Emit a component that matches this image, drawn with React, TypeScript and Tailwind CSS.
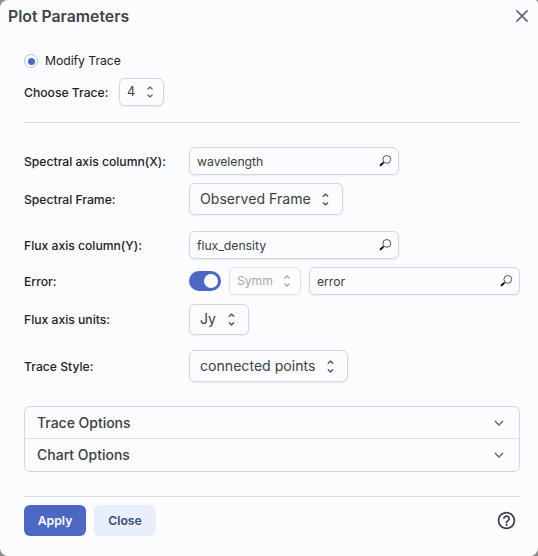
import type { ReactNode } from 'react';

const box =
  'flex shrink-0 items-center rounded-[6px] border border-[#ced7e3] bg-[#fcfcfe] text-[#3a3f45] shadow-[0_1px_2px_rgba(21,21,21,0.08)]';

function UnfoldIcon({ className }: { className: string }) {
  return (
    <svg viewBox="0 0 24 24" fill="currentColor" className={className}>
      <path d="m12 5.83 2.46 2.46a1 1 0 0 0 1.41-1.41L12.7 3.7a1 1 0 0 0-1.41 0L8.12 6.88a1 1 0 1 0 1.41 1.41L12 5.83zm0 12.34-2.46-2.46a1 1 0 0 0-1.41 1.41l3.17 3.18a1 1 0 0 0 1.41 0l3.17-3.17a1 1 0 0 0-1.41-1.41L12 18.17z" />
    </svg>
  );
}

function SearchIcon() {
  return (
    <svg viewBox="0 0 14 14" fill="none" className="h-[14px] w-[14px] shrink-0">
      <circle cx="8.8" cy="5.4" r="3.9" stroke="#444" strokeWidth="0.9" />
      <path d="M5.9 8.2 5 9.1" stroke="#333" strokeWidth="1" />
      <path d="M4.8 9.3 2.6 11.3" stroke="#050505" strokeWidth="1.9" strokeLinecap="round" />
    </svg>
  );
}

function Chevron() {
  return (
    <svg viewBox="0 0 10 6" fill="none" className="h-[6px] w-[10px]">
      <path d="M1 1 5 5 9 1" stroke="#636b74" strokeWidth="1.5" />
    </svg>
  );
}

function ColumnInput({ value, className }: { value: string; className: string }) {
  return (
    <div className={`${box} h-7 justify-between pr-[6px] pl-[7px] ${className}`}>
      <span className="pt-px text-[12.25px] leading-[18px] tracking-[-0.04px]">{value}</span>
      <SearchIcon />
    </div>
  );
}

function Select({ value, className }: { value: string; className: string }) {
  return (
    <div className={`${box} justify-between pr-[8px] pl-[10px] text-[14.1px] leading-5 ${className}`}>
      <span>{value}</span>
      <UnfoldIcon className="h-[17px] w-[17px] text-[#555e68]" />
    </div>
  );
}

function Row({ label, className, children }: { label: string; className: string; children: ReactNode }) {
  return (
    <div className={`flex items-center ${className}`}>
      <span className="w-[165px] shrink-0 pt-px text-[12.2px] leading-[18px] font-medium tracking-[-0.02px]">
        {label}
      </span>
      {children}
    </div>
  );
}

export default function App() {
  return (
    <div className="h-[556px] w-[538px] bg-[#8b8b90] font-['Inter','Liberation_Sans',sans-serif] text-[#202326]">
      <div className="flex h-full flex-col rounded-[8px] rounded-tr-[4px] bg-[#fcfcfe]">
        <header className="flex h-8 items-center justify-between pr-[9px] pl-2">
          <h1 className="pt-[2px] text-[15.8px] leading-6 font-semibold text-[#3f444b]">Plot Parameters</h1>
          <svg viewBox="0 0 14 14" fill="none" className="h-[14px] w-[14px]">
            <path d="M1.4 1.4 12.6 12.6M12.6 1.4 1.4 12.6" stroke="#5d656f" strokeWidth="1.6" />
          </svg>
        </header>

        <main className="flex flex-col px-6 pr-[18px] pt-5">
          <div className="flex h-[18px] items-center gap-[7px]">
            <span className="flex h-[14px] w-[14px] items-center justify-center rounded-full border border-[#a8c0ee]">
              <span className="h-[7px] w-[7px] rounded-full bg-[#4c68c4]" />
            </span>
            <span className="text-[12.2px] leading-[18px] tracking-[-0.04px]">Modify Trace</span>
          </div>

          <div className="mt-2 flex h-7 items-center">
            <span className="w-[95px] pt-px text-[12.2px] leading-[18px] font-medium tracking-[-0.02px]">
              Choose Trace:
            </span>
            <div className={`${box} h-7 w-[45px] justify-between pr-[5px] pl-[7px] text-[12.6px]`}>
              <span className="pt-px">4</span>
              <UnfoldIcon className="h-4 w-4 text-[#636b74]" />
            </div>
          </div>

          <div className="mt-4 h-px bg-[#d9dce2]" />

          <Row label="Spectral axis column(X):" className="mt-6 h-7">
            <ColumnInput value="wavelength" className="w-[210px]" />
          </Row>
          <Row label="Spectral Frame:" className="mt-2 h-8">
            <Select value="Observed Frame" className="h-8 w-[154px]" />
          </Row>
          <Row label="Flux axis column(Y):" className="mt-4 h-7">
            <ColumnInput value="flux_density" className="w-[210px]" />
          </Row>
          <Row label="Error:" className="mt-2 h-7">
            <div className="mr-2 flex h-5 w-8 items-center justify-end rounded-full bg-[#4c68c4] pr-[3px]">
              <span className="h-[14px] w-[14px] rounded-full bg-white" />
            </div>
            <div className="mr-2 flex h-7 w-[72px] items-center justify-between rounded-[6px] border border-[#dde4ed] pr-[5px] pl-[7px] text-[12.2px] tracking-[-0.04px] text-[#a2a8af] shadow-[0_1px_2px_rgba(21,21,21,0.06)]">
              <span>Symm</span>
              <UnfoldIcon className="h-4 w-4" />
            </div>
            <ColumnInput value="error" className="w-[211px]" />
          </Row>
          <Row label="Flux axis units:" className="mt-2 h-8">
            <Select value="Jy" className="h-[31px] w-[60px]" />
          </Row>
          <Row label="Trace Style:" className="mt-[15px] h-8">
            <Select value="connected points" className="h-8 w-[159px]" />
          </Row>

          <div className="mt-6 flex h-[66px] flex-col rounded-[6px] border border-[#ced7e3] text-[14px] font-medium text-[#3a3f45]">
            <div className="flex h-8 items-center justify-between border-b border-[#d7dfe7] pr-[15px] pl-3">
              <span className="tracking-[-0.02px]">Trace Options</span>
              <Chevron />
            </div>
            <div className="flex h-[31px] items-center justify-between pr-[15px] pl-3">
              <span>Chart Options</span>
              <Chevron />
            </div>
          </div>

          <div className="mt-6 h-px bg-[#d9dce2]" />

          <footer className="mt-2 flex h-[31px] items-center">
            <button className="h-[31px] w-[62px] rounded-[6px] bg-[#4c68c4] pt-px text-[12.25px] font-semibold text-white">
              Apply
            </button>
            <button className="ml-2 h-[31px] w-[62px] rounded-[6px] bg-[#e8eefa] pt-px text-[12.25px] font-semibold text-[#3b4b80]">
              Close
            </button>
            <svg viewBox="0 0 24 24" fill="#3a3f45" className="mr-[3px] ml-auto h-[21px] w-[21px]">
              <path d="M11 18h2v-2h-2v2zm1-16C6.48 2 2 6.48 2 12s4.48 10 10 10 10-4.48 10-10S17.52 2 12 2zm0 18c-4.41 0-8-3.59-8-8s3.59-8 8-8 8 3.59 8 8-3.59 8-8 8zm0-14c-2.21 0-4 1.79-4 4h2c0-1.1.9-2 2-2s2 .9 2 2c0 2-3 1.75-3 5h2c0-2.25 3-2.5 3-5 0-2.21-1.79-4-4-4z" />
            </svg>
          </footer>
        </main>
      </div>
    </div>
  );
}
